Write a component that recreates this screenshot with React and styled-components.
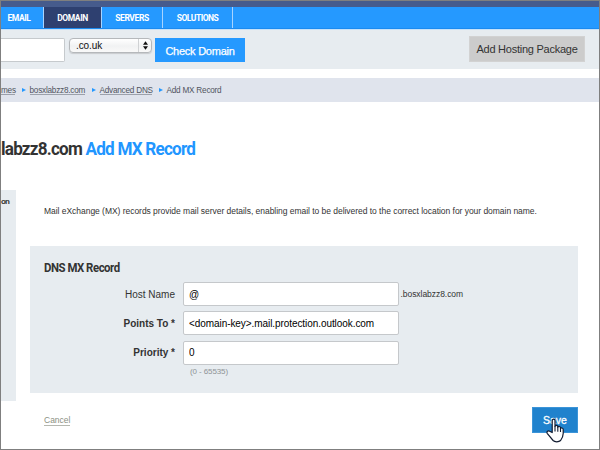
import React from 'react';
import styled, { createGlobalStyle } from 'styled-components';

const GlobalStyle = createGlobalStyle`
  * { box-sizing: border-box; }
  body { margin: 0; background: #fff; font-family: "Liberation Sans", Arial, sans-serif; }
`;

const Frame = styled.div`
  width: 600px;
  height: 450px;
  overflow: hidden;
  position: relative;
  border: 1px solid #7f7f7f;
  background: #fff;
  color: #333;
  white-space: nowrap;
`;

const TopStrip = styled.div`
  height: 6px;
  background: #465b8c;
`;

const Nav = styled.nav`
  display: flex;
  height: 22px;
  background: #2599ff;
  border-bottom: 1px solid #1b8af0;
`;

const NavItem = styled.a`
  width: ${(p) => p.$width}px;
  height: 21px;
  border-right: 1px solid #a8d4ff;
  background: ${(p) => (p.$active ? '#2e4070' : 'transparent')};
  color: #fff;
  font: bold 8.5px/22px Roboto, sans-serif;
  letter-spacing: ${(p) => p.$spacing || 0}px;
  text-align: center;
  padding-right: ${(p) => p.$inset || 0}px;
`;

const SearchBar = styled.div`
  display: flex;
  align-items: flex-start;
  height: 40px;
  background: #e7ecf0;
  border-top: 1px solid #c5e1fa;
  padding-right: 14px;
`;

const DomainInput = styled.div`
  width: 64px;
  height: 24px;
  margin: 8px 4px 0 0;
  background: #fff;
  border: 1px solid #c6cacd;
  border-left: 0;
  border-radius: 0 2px 2px 0;
`;

const Select = styled.div`
  display: flex;
  align-items: center;
  width: 83px;
  height: 15px;
  margin-top: 8px;
  padding-left: 6px;
  border: 1px solid #b5b8bb;
  border-radius: 4px;
  background: linear-gradient(#fff, #f1f2f3 55%, #f9f9f9);
  box-shadow: 0 1px 1px #c8cbce;
  color: #111;
  font-size: 10px;
  letter-spacing: -0.1px;
`;

const Stepper = styled.span`
  display: flex;
  align-items: center;
  justify-content: center;
  width: 13px;
  height: 13px;
  margin-left: auto;
  border-left: 1px solid #d0d2d4;
`;

const CheckButton = styled.button`
  width: 90px;
  height: 24px;
  margin: 8px 0 0 3px;
  padding: 1px 0 0;
  border: 0;
  background: #2599ff;
  color: #fff;
  font: 11px "Liberation Sans", sans-serif;
  letter-spacing: -0.25px;
  -webkit-text-stroke: 0.25px #fff;
`;

const HostingButton = styled.button`
  width: 116px;
  height: 26px;
  margin: 6px 0 0 auto;
  padding: 0;
  border: 1px solid #d2d2d2;
  background: #ccc;
  color: #333;
  font: 11px "Liberation Sans", sans-serif;
  letter-spacing: -0.25px;
`;

const Breadcrumbs = styled.div`
  display: flex;
  align-items: center;
  height: 24px;
  margin-top: 9px;
  background: #e0e4ed;
  color: #505560;
  font-size: 8.2px;
`;

const Crumb = styled.span`
  width: ${(p) => p.$width}px;
  height: 10px;
  line-height: 11px;
  border-bottom: 1px solid ${(p) => (p.$current ? 'transparent' : '#9ca1ab')};
  letter-spacing: ${(p) => p.$spacing || 0}px;
`;

const CrumbArrow = styled.span`
  margin: 0 3.5px 0 7px;
  border: 2.5px solid transparent;
  border-left: 4px solid #2599ff;
  border-right: 0;
`;

const Title = styled.h1`
  width: max-content;
  height: 24px;
  margin: 35px 0 0;
  color: #333;
  font: bold 18.5px/25px Roboto, sans-serif;
  letter-spacing: -0.85px;
  transform: scaleX(${(p) => p.$stretch});
  transform-origin: left;
  em { color: #2196ff; font-style: normal; }
`;

const Columns = styled.div`
  display: flex;
  align-items: flex-start;
  margin-top: 29px;
`;

const Sidebar = styled.aside`
  width: 15px;
  height: 211px;
  padding-top: 7px;
  background: #e7ecf0;
  font-size: 8px;
  font-weight: bold;
  line-height: 10px;
  letter-spacing: -1px;
`;

const Main = styled.main`
  width: 548px;
  margin-left: 14px;
`;

const Intro = styled.p`
  height: 12px;
  margin: 15px 0 29px 14px;
  font-size: 8.5px;
  line-height: 12px;
  letter-spacing: ${(p) => p.$spacing}px;
`;

const Panel = styled.section`
  height: 147px;
  padding: 14px 0 0 14px;
  background: #e7ecf0;
`;

const PanelTitle = styled.h2`
  width: max-content;
  height: 16px;
  margin: 0 0 6px;
  font: bold 12px/16px Roboto, sans-serif;
  letter-spacing: -0.5px;
  transform: scaleX(0.95);
  transform-origin: left;
`;

const Field = styled.div`
  display: flex;
  align-items: center;
  height: 24px;
  margin-bottom: 5.4px;
`;

const Label = styled.label`
  width: 131px;
  margin-right: 8px;
  text-align: right;
  font-size: 10px;
  font-weight: ${(p) => (p.$required ? 'bold' : 'normal')};
`;

const TextInput = styled.input`
  width: 216px;
  height: 24px;
  padding: 0 5px;
  border: 1px solid #c5c8cb;
  border-radius: 2px;
  outline: 0;
  background: #fff;
  color: #000;
  font: 10px "Liberation Sans", sans-serif;
  letter-spacing: -0.07px;
`;

const Suffix = styled.span`
  margin-left: 1.5px;
  font-size: 8.5px;
  letter-spacing: -0.05px;
`;

const Hint = styled.div`
  margin: -3px 0 0 146px;
  color: #8e9396;
  font-size: 8px;
  line-height: 10px;
  letter-spacing: -0.1px;
`;

const Footer = styled.footer`
  display: flex;
  justify-content: space-between;
  margin: 14px 0 0 14px;
`;

const Cancel = styled.a`
  height: 10px;
  margin-top: 9px;
  color: #8b9183;
  border-bottom: 1px solid #b5b8b0;
  font-size: 8.5px;
  line-height: 9px;
`;

const SaveButton = styled.button`
  width: 46px;
  height: 26px;
  padding: 0;
  border: 1px solid #3b94d8;
  background: #2082cd;
  color: #fff;
  font: 10.5px "Liberation Sans", sans-serif;
  -webkit-text-stroke: 0.3px #fff;
`;

const HandCursor = styled.svg`
  position: absolute;
  left: 545px;
  top: 417px;
`;

const navItems = [
  { label: 'EMAIL', width: 43, inset: 6, spacing: -0.4 },
  { label: 'DOMAIN', width: 58, active: true, spacing: -0.4 },
  { label: 'SERVERS', width: 61, spacing: -0.4 },
  { label: 'SOLUTIONS', width: 70, spacing: -0.5 },
];

const crumbs = [
  { label: 'mes', width: 14 },
  { label: 'bosxlabzz8.com', width: 55.5 },
  { label: 'Advanced DNS', width: 52.5 },
  { label: 'Add MX Record', width: 56, current: true },
];

const fields = [
  { label: 'Host Name', value: '@', suffix: '.bosxlabzz8.com' },
  { label: 'Points To *', value: '<domain-key>.mail.protection.outlook.com', required: true },
  { label: 'Priority *', value: '0', required: true },
];

export default function App() {
  return (
    <Frame>
      <GlobalStyle />
      <TopStrip />
      <Nav>
        {navItems.map((n) => (
          <NavItem key={n.label} $width={n.width} $active={n.active} $spacing={n.spacing} $inset={n.inset}>
            {n.label}
          </NavItem>
        ))}
      </Nav>
      <SearchBar>
        <DomainInput />
        <Select>
          .co.uk
          <Stepper>
            <svg width="5" height="9" viewBox="0 0 5 9">
              <path d="M0 3.8L2.5 .2L5 3.8ZM0 5.2L2.5 8.8L5 5.2Z" fill="#111" />
            </svg>
          </Stepper>
        </Select>
        <CheckButton>Check Domain</CheckButton>
        <HostingButton>Add Hosting Package</HostingButton>
      </SearchBar>
      <Breadcrumbs>
        {crumbs.map((c, i) => (
          <React.Fragment key={c.label}>
            {i > 0 && <CrumbArrow />}
            <Crumb $width={c.width} $current={c.current} $spacing={-0.22}>{c.label}</Crumb>
          </React.Fragment>
        ))}
      </Breadcrumbs>
      <Title $stretch={0.926}>labzz8.com <em>Add MX Record</em></Title>
      <Columns>
        <Sidebar>on</Sidebar>
        <Main>
          <Intro $spacing={-0.035}>
            Mail eXchange (MX) records provide mail server details, enabling email to be delivered to the correct location for your domain name.
          </Intro>
          <Panel>
            <PanelTitle>DNS MX Record</PanelTitle>
            {fields.map((f) => (
              <Field key={f.label}>
                <Label $required={f.required}>{f.label}</Label>
                <TextInput defaultValue={f.value} />
                {f.suffix && <Suffix>{f.suffix}</Suffix>}
              </Field>
            ))}
            <Hint>(0 - 65535)</Hint>
          </Panel>
          <Footer>
            <Cancel>Cancel</Cancel>
            <SaveButton>Save</SaveButton>
          </Footer>
        </Main>
      </Columns>
      <HandCursor width="19" height="25" viewBox="0 0 19 25">
        <path
          d="M6.2 14.5V2.8C6.2 .6 9 .6 9 2.8V8.4C9.2 6.8 11.7 7 11.8 8.7V9.4C12.2 8 14.4 8.2 14.5 9.8V10.6C15 9.4 17.2 9.8 17.2 11.5V15.5C17.2 18.5 15.8 20.7 14.6 22.5C12.8 24.2 8.6 24.2 7.1 22.5L1.4 15.6C.1 13.7 2.2 12.2 3.7 13.2Z"
          fill="#fff"
          stroke="#111b30"
          strokeWidth="1.2"
          strokeLinejoin="round"
        />
        <path d="M9 8.3V13.5M11.8 9.2V13.7M14.5 10.5V14" stroke="#111b30" strokeWidth="1.1" fill="none" />
      </HandCursor>
    </Frame>
  );
}
